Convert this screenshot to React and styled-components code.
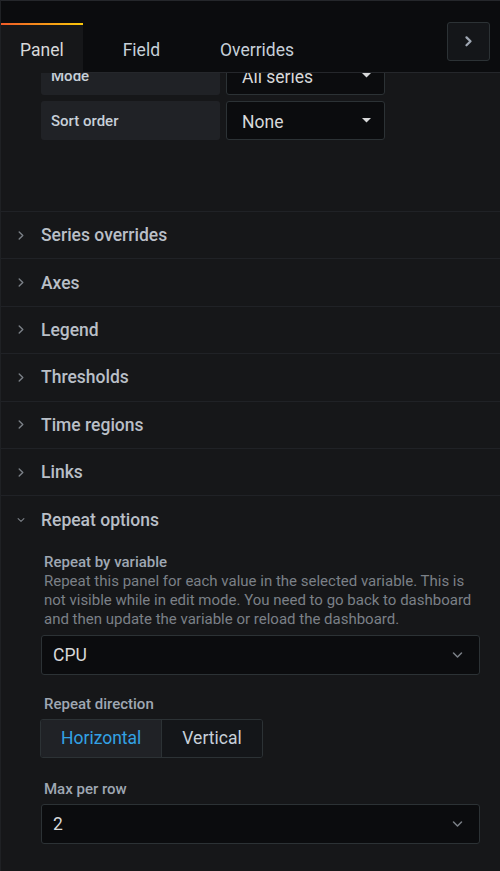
import React from 'react';
import styled, { createGlobalStyle } from 'styled-components';

const GlobalStyle = createGlobalStyle`
  html, body { margin: 0; padding: 0; background: #161719; }
  body { font-family: Roboto, "Liberation Sans", sans-serif; }
  * { box-sizing: border-box; }
`;

const rows = ["Series overrides", "Axes", "Legend", "Thresholds", "Time regions", "Links"];

const Page = styled.div`
  width: 500px;
  height: 871px;
  overflow: hidden;
  display: flex;
  flex-direction: column;
  background: #161719;
  border-top: 1px solid #25272b;
  border-left: 1px solid #1f2124;
`;

const TabBar = styled.div`
  height: 72px;
  flex-shrink: 0;
  display: flex;
  align-items: flex-end;
  background: #0b0c0e;
  border-bottom: 1px solid #25272b;
  padding-right: 10px;
  position: relative;
  z-index: 2;
`;

const Tab = styled.div`
  height: 50px;
  margin-bottom: -1px;
  margin-right: ${p => (p.active ? 21 : 22)}px;
  padding: 2px 19px 0;
  display: flex;
  align-items: center;
  font-size: 17.5px;
  color: ${p => (p.active ? '#d8d9da' : '#c7d0d9')};
  background: ${p => (p.active ? '#161719' : 'transparent')};
  border-top: 2px solid transparent;
  border-image: ${p => (p.active ? 'linear-gradient(90deg, #f05a28, #fbca0a) 1' : 'none')};
`;

const CollapseBtn = styled.button`
  margin-left: auto;
  align-self: flex-start;
  margin-top: 21px;
  width: 43px;
  height: 39px;
  background: #141619;
  border: 1px solid #2c3235;
  border-radius: 3px;
  display: flex;
  align-items: center;
  justify-content: center;
  padding: 0;
`;

const ScrollArea = styled.div`
  flex: 1;
  overflow: hidden;
`;

const ScrollInner = styled.div`
  margin-top: -17px;
`;

const OptionsGroup = styled.div`
  padding: 0 0 71px 40px;
  display: flex;
  flex-direction: column;
  gap: 6px;
`;

const InlineRow = styled.div`
  display: flex;
  gap: 6px;
`;

const InlineLabel = styled.div`
  width: 179px;
  height: 39px;
  background: #202226;
  border-radius: 3px;
  padding: 1px 0 0 10px;
  display: flex;
  align-items: center;
  font-size: 15px;
  font-weight: 500;
  color: #c7d0d9;
`;

const InlineSelect = styled.div`
  width: 159px;
  height: 39px;
  background: #0b0c0e;
  border: 1px solid #2c3235;
  border-radius: 3px;
  padding: 3px 13px 0 15px;
  display: flex;
  align-items: center;
  justify-content: space-between;
  font-size: 17.5px;
  color: #d8d9da;
  svg { margin-top: -3px; }
`;

const Section = styled.div`
  border-top: 1px solid #202226;
`;

const SectionHeader = styled.div`
  height: 46.4px;
  display: flex;
  align-items: center;
  padding-left: 16px;
  gap: 16px;
  font-size: 17.5px;
  font-weight: 500;
  color: #b9bfc7;
`;

const ChevronBox = styled.span`
  width: 8px;
  display: flex;
  justify-content: center;
`;

const SectionBody = styled.div`
  padding: 10px 20px 30px 40px;
`;

const Field = styled.div`
  margin-bottom: ${p => p.gap || 20}px;
`;

const Label = styled.div`
  padding-left: 3px;
  font-size: 15px;
  line-height: 19px;
  font-weight: 500;
  color: #9fa7b3;
  margin-bottom: 5px;
`;

const Description = styled.div`
  padding-left: 3px;
  font-size: 15px;
  line-height: 19px;
  color: #7b8087;
  margin: -5px 0 6px;
`;

const Select = styled.div`
  height: 40px;
  background: #0b0c0e;
  border: 1px solid #2c3235;
  border-radius: 3px;
  padding: 0 16px 0 11px;
  display: flex;
  align-items: center;
  justify-content: space-between;
  font-size: 17.5px;
  color: #d8d9da;
`;

const RadioGroup = styled.div`
  display: inline-flex;
  margin-left: -1px;
  border: 1px solid #2c3235;
  border-radius: 3px;
  overflow: hidden;
`;

const RadioOption = styled.div`
  height: 37px;
  padding: 0 20px;
  display: flex;
  align-items: center;
  font-size: 17.5px;
  color: ${p => (p.active ? '#33a2e5' : '#c7d0d9')};
  background: ${p => (p.active ? '#202226' : '#141619')};
  & + & { border-left: 1px solid #2c3235; }
`;

const ChevronRight = ({ color = '#7b8087', size = 8, stroke = 1.4 }) => (
  <svg width={size} height={size * 1.4} viewBox="0 0 8 11" fill="none">
    <path d="M2.2 2 L5.8 5.5 L2.2 9" stroke={color} strokeWidth={stroke} strokeLinecap="round" strokeLinejoin="round" />
  </svg>
);

const ChevronDown = ({ color = '#7b8087' }) => (
  <svg width="11" height="8" viewBox="0 0 11 8" fill="none">
    <path d="M1.5 2 L5.5 6 L9.5 2" stroke={color} strokeWidth="1.5" strokeLinecap="round" strokeLinejoin="round" />
  </svg>
);

const Caret = () => (
  <svg width="9" height="5" viewBox="0 0 9 5">
    <polygon points="0,0 9,0 4.5,4.5" fill="#d8d9da" />
  </svg>
);

export default function App() {
  return (
    <Page>
      <GlobalStyle />
      <TabBar>
        <Tab active>Panel</Tab>
        <Tab>Field</Tab>
        <Tab>Overrides</Tab>
        <CollapseBtn>
          <ChevronRight color="#9fa7b3" size={9} stroke={2} />
        </CollapseBtn>
      </TabBar>

      <ScrollArea>
        <ScrollInner>
          <OptionsGroup>
            <InlineRow>
              <InlineLabel>Mode</InlineLabel>
              <InlineSelect>All series <Caret /></InlineSelect>
            </InlineRow>
            <InlineRow>
              <InlineLabel>Sort order</InlineLabel>
              <InlineSelect>None <Caret /></InlineSelect>
            </InlineRow>
          </OptionsGroup>

          {rows.map(title => (
            <Section key={title}>
              <SectionHeader>
                <ChevronBox><ChevronRight /></ChevronBox>
                {title}
              </SectionHeader>
            </Section>
          ))}

          <Section>
            <SectionHeader>
              <ChevronBox><ChevronDown /></ChevronBox>
              Repeat options
            </SectionHeader>
            <SectionBody>
              <Field>
                <Label>Repeat by variable</Label>
                <Description>
                  Repeat this panel for each value in the selected variable. This is not visible while in edit mode. You need to go back to dashboard and then update the variable or reload the dashboard.
                </Description>
                <Select>CPU <ChevronDown /></Select>
              </Field>
              <Field gap={22}>
                <Label>Repeat direction</Label>
                <RadioGroup>
                  <RadioOption active>Horizontal</RadioOption>
                  <RadioOption>Vertical</RadioOption>
                </RadioGroup>
              </Field>
              <Field>
                <Label>Max per row</Label>
                <Select>2 <ChevronDown /></Select>
              </Field>
            </SectionBody>
          </Section>
        </ScrollInner>
      </ScrollArea>
    </Page>
  );
}
